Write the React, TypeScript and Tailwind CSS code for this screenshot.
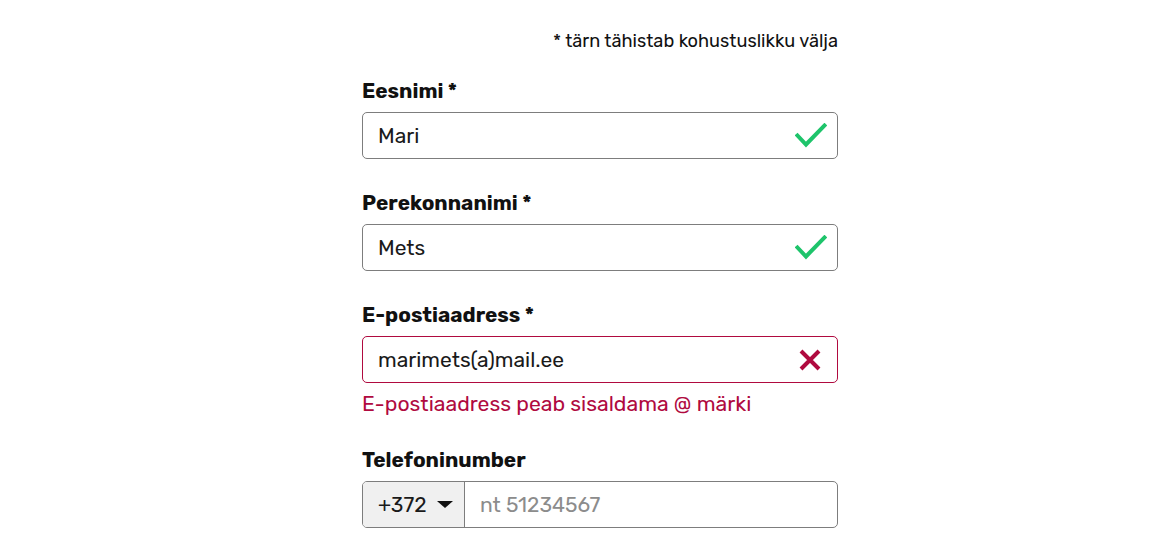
import React from "react";

const font = { fontFamily: "Rubik, Inter, 'Noto Sans', sans-serif" };

const Check = () => (
  <svg width="32" height="26" viewBox="0 0 32 26" className="absolute right-[10px] top-1/2 -translate-y-1/2">
    <path d="M2.5 12.5 L11 21.5 L29.5 2.5" fill="none" stroke="#1ec46b" strokeWidth="4" strokeLinecap="square" />
  </svg>
);

const Cross = () => (
  <svg width="24" height="22" viewBox="0 0 24 22" className="absolute right-[15px] top-1/2 -translate-y-1/2">
    <path d="M3 2 L21 20 M21 2 L3 20" fill="none" stroke="#b00a3f" strokeWidth="4" />
  </svg>
);

type FieldProps = {
  label: string;
  value: string;
  state: "ok" | "error";
};

const Field = ({ label, value, state }: FieldProps) => (
  <div>
    <label className="block text-[20.8px] leading-6 font-bold text-[#111]">{label}</label>
    <div
      className={
        "relative mt-[9px] h-[47px] rounded-[5px] border bg-white " +
        (state === "error" ? "border-[#b00a3f]" : "border-[#7d7d7d]")
      }
    >
      <input
        readOnly
        value={value}
        className="h-full w-full bg-transparent pl-[15px] pr-12 text-[21px] text-[#1a1a1a] outline-none"
        style={font}
      />
      {state === "ok" ? <Check /> : <Cross />}
    </div>
  </div>
);

export default function App() {
  return (
    <div className="min-h-[555px] bg-white" style={font}>
      <div className="ml-[362px] w-[476px] pt-[29px]">
        <p className="text-right text-[18.2px] leading-6 text-[#111]">* tärn tähistab kohustuslikku välja</p>

        <div className="mt-[26px] flex flex-col gap-[32px]">
          <Field label="Eesnimi *" value="Mari" state="ok" />
          <Field label="Perekonnanimi *" value="Mets" state="ok" />
          <div>
            <Field label="E-postiaadress *" value="marimets(a)mail.ee" state="error" />
            <p className="mt-[9px] text-[21.2px] leading-6 text-[#b00a3f]">E-postiaadress peab sisaldama @ märki</p>
          </div>
          <div>
            <label className="block text-[20.8px] leading-6 font-bold text-[#111]">Telefoninumber</label>
            <div className="mt-[9px] flex h-[47px] overflow-hidden rounded-[5px] border border-[#7d7d7d] bg-white">
              <div className="flex w-[102px] items-center justify-between border-r border-[#7d7d7d] bg-[#f0f0f0] pl-[15px] pr-[11px]">
                <span className="text-[21px] text-[#1a1a1a]">+372</span>
                <span className="h-0 w-0 border-x-[8px] border-t-[7px] border-x-transparent border-t-[#111]" />
              </div>
              <input
                readOnly
                placeholder="nt 51234567"
                className="h-full flex-1 bg-transparent pl-[15px] text-[21px] text-[#1a1a1a] outline-none placeholder:text-[#8c8c8c]"
                style={font}
              />
            </div>
          </div>
        </div>
      </div>
    </div>
  );
}
